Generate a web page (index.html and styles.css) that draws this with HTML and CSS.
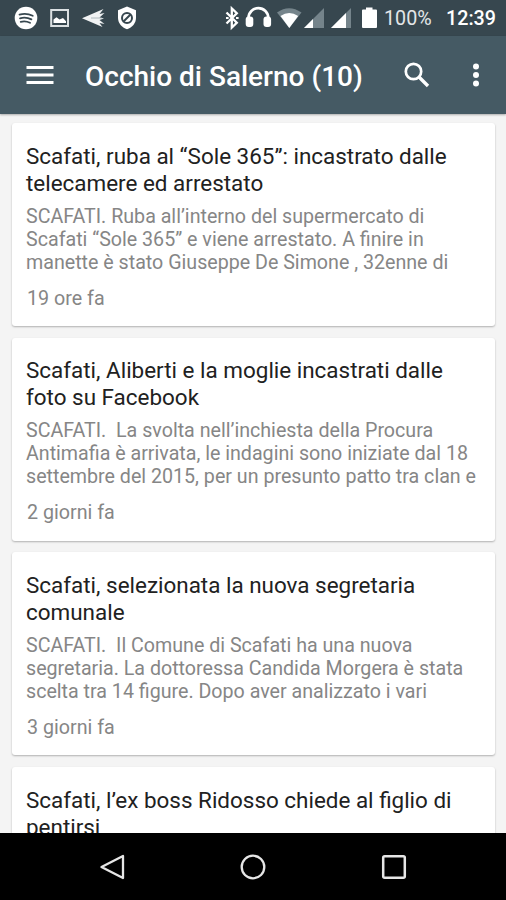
FILE: index.html
```html
<!DOCTYPE html>
<html lang="it">
<head>
  <meta charset="UTF-8">
  <meta name="viewport" content="width=device-width, initial-scale=1.0">
  <title>Occhio di Salerno</title>
  <link rel="stylesheet" href="styles.css">
</head>
<body>
  <div class="status-bar">
    <svg class="status-icons" width="140" height="36" viewBox="0 0 140 36">
      <circle cx="26" cy="18" r="11.3" fill="#fff"/>
      <path d="M19.5 14.6q7-2 13.2 1.2M20 18.3q6-1.6 11.4 1.1M20.7 21.8q5-1.2 9.3 1" fill="none" stroke="#37474f" stroke-width="1.8" stroke-linecap="round"/>
      <rect x="51.2" y="10" width="16.8" height="16" fill="none" stroke="#dce1e3" stroke-width="2"/>
      <path d="M53.5 23v-3.500l3-2.200 3 2.200 3.500-1.500 3 3.200v1.800z" fill="#fff"/>
      <path d="M82 18.200L103.500 9l-4 5 5-1-5 4.500 4.500 1-4.500 1.500 5 4-5-1 3 4z" fill="#f1f3f4"/>
      <path d="M91 18h11" stroke="#9eaab0" stroke-width=".8"/>
      <path d="M127 6.500l9 3.700v7.500c0 5.500-3.800 9.800-9 11.500-5.200-1.700-9-6-9-11.500v-7.500z" fill="#fff"/>
      <circle cx="127" cy="18" r="5" fill="none" stroke="#37474f" stroke-width="2"/>
      <path d="M123.500 21.500l7-7" stroke="#37474f" stroke-width="2"/>
    </svg>
    <svg class="status-icons" width="154" height="36" viewBox="224 0 154 36">
      <path d="M226.500 12.500l10.300 10.300-5 4.700V8.500l5 4.700-10.300 10.300" fill="none" stroke="#fff" stroke-width="2.300"/>
      <path d="M226 18h2.600M236 18h2.600" stroke="#fff" stroke-width="2.200"/>
      <path d="M248.500 20v-2a9.900 9.900 0 0 1 19.800 0v2" fill="none" stroke="#fff" stroke-width="2.600"/>
      <rect x="245.700" y="16.500" width="7.600" height="10.500" rx="3" fill="#fff"/>
      <rect x="263.500" y="16.500" width="7.600" height="10.500" rx="3" fill="#fff"/>
      <path d="M277 12.500q12-8.500 24.500 0L289.300 28z" fill="#75848b"/>
      <path d="M280.500 16q8.700-6.200 17.700 0L289.300 28z" fill="#fff"/>
      <path d="M304 28L324 8v20z" fill="#75848b"/>
      <path d="M304 28l9-9v9z" fill="#fff"/>
      <path d="M331 28L351 8v20z" fill="#75848b"/>
      <path d="M331 28l15-15v15z" fill="#fff"/>
      <path d="M366 7.500h6.500v2H376a1 1 0 0 1 1 1V27a1 1 0 0 1-1 1h-13a1 1 0 0 1-1-1V10.500a1 1 0 0 1 1-1h3z" fill="#fff"/>
    </svg>
    <span class="battery">100%</span>
    <span class="clock">12:39</span>
  </div>

  <header class="toolbar">
    <svg class="menu" width="28" height="20" viewBox="0 0 28 20">
      <path d="M.500 2.500h27M.500 10h27M.500 17.500h27" stroke="#fff" stroke-width="3"/>
    </svg>
    <h1 class="toolbar-title">Occhio di Salerno (10)</h1>
    <svg class="search" width="26" height="26" viewBox="0 0 26 26">
      <circle cx="9.500" cy="9.500" r="7.700" fill="none" stroke="#fff" stroke-width="2.700"/>
      <path d="M15 15l9 9" stroke="#fff" stroke-width="3.300"/>
    </svg>
    <svg class="more" width="8" height="24" viewBox="0 0 8 24">
      <circle cx="4" cy="3.500" r="3" fill="#fff"/>
      <circle cx="4" cy="12" r="3" fill="#fff"/>
      <circle cx="4" cy="20.500" r="3" fill="#fff"/>
    </svg>
  </header>

  <main class="news-list">
    <article class="card">
      <h2 class="card-title">Scafati, ruba al “Sole 365”: incastrato dalle<br>telecamere ed arrestato</h2>
      <p class="card-text">SCAFATI. Ruba all’interno del supermercato di<br>Scafati “Sole 365” e viene arrestato. A finire in<br>manette è stato Giuseppe De Simone , 32enne di</p>
      <p class="card-date">19 ore fa</p>
    </article>
    <article class="card">
      <h2 class="card-title">Scafati, Aliberti e la moglie incastrati dalle<br>foto su Facebook</h2>
      <p class="card-text">SCAFATI.&nbsp; La svolta nell’inchiesta della Procura<br>Antimafia è arrivata, le indagini sono iniziate dal 18<br>settembre del 2015, per un presunto patto tra clan e</p>
      <p class="card-date">2 giorni fa</p>
    </article>
    <article class="card">
      <h2 class="card-title">Scafati, selezionata la nuova segretaria<br>comunale</h2>
      <p class="card-text">SCAFATI.&nbsp; Il Comune di Scafati ha una nuova<br>segretaria. La dottoressa Candida Morgera è stata<br>scelta tra 14 figure. Dopo aver analizzato i vari</p>
      <p class="card-date">3 giorni fa</p>
    </article>
    <article class="card">
      <h2 class="card-title">Scafati, l’ex boss Ridosso chiede al figlio di<br>pentirsi</h2>
    </article>
  </main>

  <nav class="nav-bar">
    <svg width="26" height="26" viewBox="0 0 26 26">
      <path d="M2.500 13L24 2v22z" fill="none" stroke="#e6e6e6" stroke-width="2.300" stroke-linejoin="round"/>
    </svg>
    <svg width="26" height="26" viewBox="0 0 26 26">
      <circle cx="13" cy="13" r="11.300" fill="none" stroke="#e6e6e6" stroke-width="2.300"/>
    </svg>
    <svg width="26" height="26" viewBox="0 0 26 26">
      <rect x="2.200" y="2.200" width="21.600" height="21.600" rx="1.500" fill="none" stroke="#e6e6e6" stroke-width="2.500"/>
    </svg>
  </nav>
</body>
</html>
```
FILE: styles.css
```css
* {
  box-sizing: border-box;
}
body {
  margin: 0;
  height: 900px;
  display: flex;
  flex-direction: column;
  overflow: hidden;
  font-family: Roboto, sans-serif;
  background-color: #f4f4f4;
}
h1, h2, p {
  margin: 0;
  font-weight: 400;
  white-space: nowrap;
}
svg {
  display: block;
  flex: none;
}
.status-bar {
  display: flex;
  align-items: center;
  height: 36px;
  flex: none;
  background-color: #37474f;
  color: #fff;
  font-size: 19.7px;
  line-height: 36px;
}
.status-icons + .status-icons {
  margin-left: 84px;
}
.battery {
  width: 62px;
  margin-left: 6px;
  padding-top: 2px;
  color: #e3e6e8;
}
.clock {
  padding-top: 2px;
  font-weight: 500;
}
.toolbar {
  display: flex;
  align-items: center;
  height: 78px;
  flex: none;
  padding: 0 26px;
  background-color: #455a64;
  color: #fff;
  position: relative;
  box-shadow: 0 1px 2px rgba(0, 0, 0, 0.3);
}
.toolbar-title {
  margin-left: 31px;
  padding-top: 3px;
  font-size: 28px;
  font-weight: 500;
}
.search {
  margin-left: auto;
}
.more {
  margin-left: 42px;
}
.news-list {
  flex: 1;
  min-height: 0;
  overflow: hidden;
  display: flex;
  flex-direction: column;
  gap: 11.7px;
  padding: 9px 11px 0 12px;
}
.card {
  flex: none;
  height: 203px;
  padding: 19.6px 14px 0;
  border-radius: 3px;
  background-color: #fff;
  box-shadow: 0 1px 2px rgba(0, 0, 0, 0.28);
}
.card-title {
  font-size: 22.45px;
  line-height: 27px;
  color: #212121;
}
.card-text {
  margin-top: 8px;
  font-size: 19.65px;
  line-height: 23px;
  color: #868686;
}
.card-date {
  margin: 13px 0 0 1px;
  font-size: 19.7px;
  line-height: 23px;
  color: #868686;
}
.nav-bar {
  display: flex;
  align-items: center;
  justify-content: center;
  gap: 115px;
  height: 67px;
  flex: none;
  background-color: #000;
}
```
